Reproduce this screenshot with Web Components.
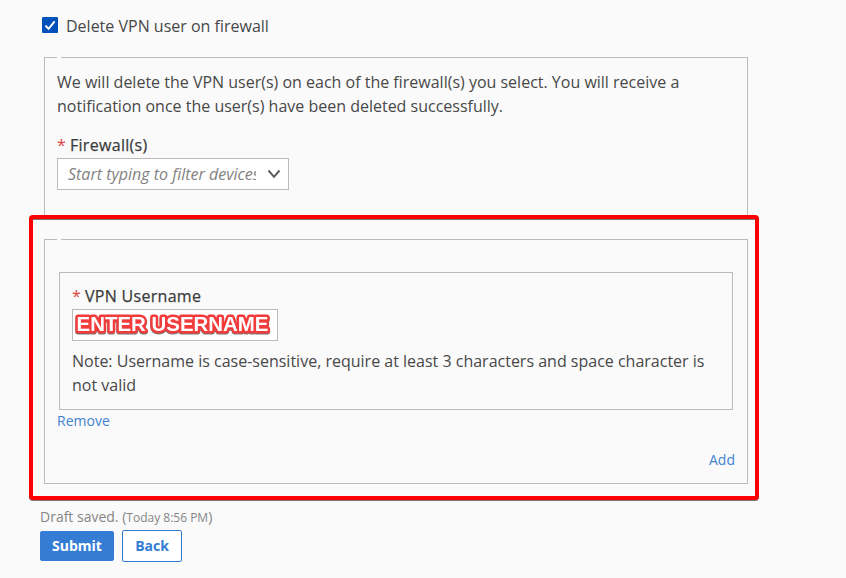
<!DOCTYPE html>
<html lang="en">
<head>
<meta charset="utf-8">
<title>Delete VPN user</title>
<style>
html,body{margin:0;background:#fafafa}
body{width:846px;height:578px;overflow:hidden;font:16px/24px "Open Sans","Noto Sans",sans-serif;color:#484848}
</style>
</head>
<body>
<vpn-form></vpn-form>
<script>
const define = (name, html) => customElements.define(name, class extends HTMLElement {
  constructor() {
    super();
    this.attachShadow({mode: 'open'}).innerHTML = html;
  }
});

define('check-option', `
<style>
:host{display:flex;align-items:center;gap:8px;height:24px}
svg{display:block;width:16px;height:16px;margin-top:-2px}
</style>
<svg viewBox="0 0 16 16"><rect width="16" height="16" rx="1" fill="#0052ba"/><path d="M3.4 8.6 6.6 11.8 12.6 4.3" fill="none" stroke="#fff" stroke-width="2"/></svg>
<span><slot></slot></span>`);

define('field-group', `
<style>
:host{display:block;box-sizing:border-box;border:1px solid #bbb;position:relative}
:host([legend])::before{content:"";position:absolute;left:12px;top:-1px;width:4px;height:1px;background:#fafafa}
</style>
<slot></slot>`);

define('required-label', `
<style>
:host{display:block;height:25px;color:#3c3c3c}
i{font-style:normal;color:#d9443f}
span{letter-spacing:.3px;-webkit-text-stroke:.25px #3c3c3c}
</style>
<i>*</i> <span><slot></slot></span>`);

define('device-picker', `
<style>
:host{display:flex;align-items:center;box-sizing:border-box;width:232px;height:32px;border:1px solid #bbb;background:#fff;padding:0 7px 0 10px;justify-content:space-between}
span{width:188px;overflow:hidden;white-space:nowrap;font-style:italic;color:#828282}
svg{width:14px;height:10px}
</style>
<span><slot></slot></span>
<svg viewBox="0 0 14 10"><path d="M1.5 1.5 7 7.8 12.5 1.5" fill="none" stroke="#5c5c5c" stroke-width="2"/></svg>`);

define('name-input', `
<style>
:host{display:block;box-sizing:border-box;width:206px;height:32px;border:1px solid #bbb;background:#fff}
svg{display:block;width:204px;height:30px}
text{font:bold 20.5px "Liberation Sans",Arial,sans-serif;fill:#fff;stroke:#f23c3c;stroke-width:5px;stroke-linejoin:round;paint-order:stroke;filter:drop-shadow(0 1px .6px #0008)}
</style>
<svg><text x="3.5" y="21" textLength="192" lengthAdjust="spacingAndGlyphs">ENTER USERNAME</text></svg>`);

define('text-link', `
<style>:host{display:block;font-size:14px;line-height:20px;color:#4482d0}</style><slot></slot>`);

define('form-button', `
<style>
:host{display:flex;align-items:center;justify-content:center;box-sizing:border-box;width:60px;height:32px;border:1px solid #347cd4;border-radius:2px;color:#347cd4;background:#fff;font-size:14px;font-weight:700;line-height:20px}
:host([primary]){width:74px;height:30px;background:#347cd4;color:#fff}
</style><slot></slot>`);

define('highlight-frame', `
<style>
:host{display:block;box-sizing:border-box;border:4px solid #f00;border-radius:4px;background:#fafafa;box-shadow:0 1px 0 #777,inset 0 1px 0 #777}
</style><slot></slot>`);

define('vpn-form', `
<style>
:host{display:block;padding:14px 0 0 29px}
check-option{margin-left:13px}
.devices{width:704px;height:158px;margin:19px 0 0 15px;padding:12px 12px 0;border-bottom:0}
p{margin:0}
.devices required-label{margin-top:15px}
highlight-frame{width:730px;height:285px;padding:20px 0 0 11px}
.users{width:704px;height:245px;padding:32px 12px 0}
.user{width:674px;height:138px;margin-left:2px;padding:11px 12px 0}
.user p{margin-top:8px}
.remove{margin-top:1px}
.add{margin-top:19px;text-align:right}
.draft{margin:7px 0 0 11px;font-size:14px;line-height:20px;color:#858585}
small{font-size:12px}
.actions{display:flex;align-items:center;gap:8px;margin:2px 0 0 11px}
</style>
<check-option>Delete VPN user on firewall</check-option>
<field-group class="devices" legend>
  <p>We will delete the VPN user(s) on each of the firewall(s) you select. You will receive a notification once the user(s) have been deleted successfully.</p>
  <required-label>Firewall(s)</required-label>
  <device-picker>Start typing to filter devices</device-picker>
</field-group>
<highlight-frame>
  <field-group class="users" legend>
    <field-group class="user">
      <required-label>VPN Username</required-label>
      <name-input></name-input>
      <p>Note: Username is case-sensitive, require at least 3 characters and space character is not valid</p>
    </field-group>
    <text-link class="remove">Remove</text-link>
    <text-link class="add">Add</text-link>
  </field-group>
</highlight-frame>
<div class="draft">Draft saved. (<small>Today 8:56 PM</small>)</div>
<div class="actions"><form-button primary>Submit</form-button><form-button>Back</form-button></div>`);
</script>
</body>
</html>
